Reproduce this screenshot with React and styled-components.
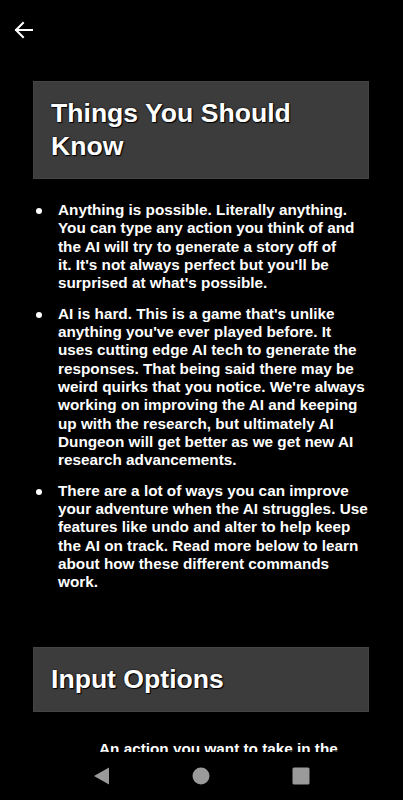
import React from "react";
import styled, { createGlobalStyle } from "styled-components";

const Global = createGlobalStyle`
  html, body { margin: 0; padding: 0; background: #000; }
  body { font-family: "Liberation Sans", Arial, sans-serif; -webkit-font-smoothing: antialiased; }
`;

const Screen = styled.div`
  width: 403px;
  height: 800px;
  background: #000;
  display: flex;
  flex-direction: column;
  overflow: hidden;
`;

const Scroll = styled.div`
  flex: 1;
  overflow: hidden;
  display: flex;
  flex-direction: column;
`;

const TopBar = styled.div`
  height: 60px;
  display: flex;
  align-items: center;
  padding-left: 12px;
  flex-shrink: 0;
`;

const BackButton = styled.button`
  background: none;
  border: none;
  padding: 0;
  width: 22px;
  height: 22px;
  display: flex;
  align-items: center;
  justify-content: center;
  color: #fff;
`;

const Content = styled.div`
  padding: 21px 34px 0 33px;
  display: flex;
  flex-direction: column;
`;

const SectionHeader = styled.div`
  background: #3c3c3c;
  border: 1px solid #444;
  padding: 15px 17px;
  margin-top: ${(p) => p.$top || 0}px;
`;

const Title = styled.h1`
  margin: 0;
  color: #fff;
  font-family: "Liberation Sans", Arial, sans-serif;
  font-weight: 700;
  font-size: 26.6px;
  line-height: 33px;
  text-shadow: 0 0 2px #000, 1px 1px 1px #000;
`;

const List = styled.div`
  display: flex;
  flex-direction: column;
  gap: 12px;
  margin-top: 22px;
`;

const Item = styled.div`
  display: flex;
  align-items: flex-start;
`;

const Dot = styled.span`
  width: 6px;
  height: 6px;
  border-radius: 50%;
  background: #fff;
  flex-shrink: 0;
  margin: 7px 16px 0 3px;
`;

const Text = styled.p`
  margin: 0;
  padding-right: 0;
  color: #fff;
  font-size: 15.3px;
  line-height: 18.33px;
  font-weight: 700;
`;

const Indented = styled.p`
  margin: 28px 0 0 66px;
  color: #fff;
  font-size: 15.3px;
  line-height: 18.33px;
  font-weight: 700;
`;

const NavBar = styled.div`
  height: 48px;
  flex-shrink: 0;
  background: #000;
  display: flex;
  align-items: center;
  justify-content: space-around;
  padding: 0 52px 0 52px;
`;

const NavIcon = styled.svg`
  width: 18px;
  height: 18px;
  fill: #9a9a9a;
`;

const items = [
  <>
    Anything is possible. Literally anything. You can type any action you think of and the AI will try to generate a story off of
    <br />
    it. It's not always perfect but you'll be surprised at what's possible.
  </>,
  "AI is hard. This is a game that's unlike anything you've ever played before. It uses cutting edge AI tech to generate the responses. That being said there may be weird quirks that you notice. We're always working on improving the AI and keeping up with the research, but ultimately AI Dungeon will get better as we get new AI research advancements.",
  "There are a lot of ways you can improve your adventure when the AI struggles. Use features like undo and alter to help keep the AI on track. Read more below to learn about how these different commands work.",
];

export default function App() {
  return (
    <>
      <Global />
      <Screen>
        <Scroll>
          <TopBar>
            <BackButton aria-label="Back">
              <svg width="20" height="20" viewBox="0 0 20 20" fill="none" stroke="#fff" strokeWidth="2" strokeLinecap="square">
                <path d="M19 10H3" />
                <path d="M10 3L3 10L10 17" />
              </svg>
            </BackButton>
          </TopBar>
          <Content>
            <SectionHeader>
              <Title>Things You Should Know</Title>
            </SectionHeader>
            <List>
              {items.map((t, i) => (
                <Item key={i}>
                  <Dot />
                  <Text>{t}</Text>
                </Item>
              ))}
            </List>
            <SectionHeader $top={55}>
              <Title>Input Options</Title>
            </SectionHeader>
            <Indented>An action you want to take in the story. Describe what you do.</Indented>
          </Content>
        </Scroll>
        <NavBar>
          <NavIcon viewBox="0 0 18 18">
            <path d="M16 0.5V17.5L1 9Z" />
          </NavIcon>
          <NavIcon viewBox="0 0 18 18">
            <circle cx="9" cy="9" r="8.5" />
          </NavIcon>
          <NavIcon viewBox="0 0 18 18">
            <rect x="0.5" y="0.5" width="17" height="17" rx="1.5" />
          </NavIcon>
        </NavBar>
      </Screen>
    </>
  );
}
